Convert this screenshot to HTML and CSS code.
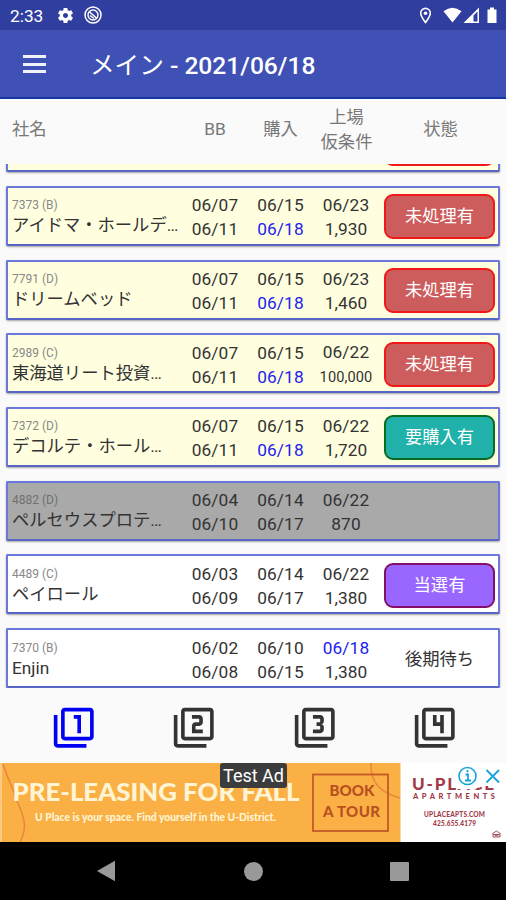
FILE: index.html
```html
<!DOCTYPE html>
<html lang="ja">
<head>
    <meta charset="UTF-8">
    <title>メイン</title>
    <link rel="stylesheet" href="styles.css">
</head>
<body>
    <div class="status-bar">
        <span class="clock">2:33</span>
        <svg class="gear" width="19" height="19" viewBox="0 0 24 24"><path fill="#fff" d="M19.14 12.94c.04-.3.06-.61.06-.94s-.02-.64-.07-.94l2.03-1.58c.18-.14.23-.41.12-.61l-1.92-3.32c-.12-.22-.37-.29-.59-.22l-2.39.96c-.5-.38-1.03-.7-1.62-.94l-.36-2.54c-.04-.24-.24-.41-.48-.41h-3.84c-.24 0-.43.17-.47.41l-.36 2.54c-.59.24-1.13.57-1.62.94l-2.39-.96c-.22-.08-.47 0-.59.22L2.74 8.87c-.12.21-.08.47.12.61l2.03 1.58c-.05.3-.09.63-.09.94s.02.64.07.94l-2.03 1.58c-.18.14-.23.41-.12.61l1.92 3.32c.12.22.37.29.59.22l2.39-.96c.5.38 1.03.7 1.62.94l.36 2.54c.05.24.24.41.48.41h3.84c.24 0 .44-.17.47-.41l.36-2.54c.59-.24 1.13-.56 1.62-.94l2.39.96c.22.08.47 0 .59-.22l1.92-3.32c.12-.22.07-.47-.12-.61l-2.01-1.58zM12 15.2c-1.76 0-3.2-1.44-3.2-3.2s1.44-3.2 3.2-3.2 3.2 1.44 3.2 3.2-1.44 3.2-3.2 3.2z"/></svg>
        <svg width="18" height="18" viewBox="0 0 18 18" fill="none" stroke="#fff">
            <circle cx="9" cy="9" r="8" stroke-width="1.5"/>
            <circle cx="9" cy="9" r="5" stroke-width="1.4"/>
            <path d="M5 5.5l8 7M6 9.5l4 3" stroke-width="1.5"/>
        </svg>
        <svg class="signals" width="76" height="20" viewBox="0 0 76 20" fill="#fff">
            <path fill="none" stroke="#fff" stroke-width="1.6" d="M3.5 17.5C.5 13.5-1.3 11-1.3 8.2a4.8 4.8 0 0 1 9.6 0c0 2.8-1.8 5.3-4.8 9.3z"/>
            <circle cx="3.5" cy="8.2" r="1.8"/>
            <path d="M21.5 6.2Q30.5-.8 39.5 6.2L30.5 17.5z"/>
            <path fill-rule="evenodd" d="M41.5 18L57 2.500V18zM51.500 16.500h4V6.500l-4 4z"/>
            <path d="M65.500 4.500h2.500v-2h4v2h2.500V18h-9z"/>
        </svg>
    </div>

    <div class="app-bar">
        <div class="menu"><i></i><i></i><i></i></div>
        <h1><span>メイン</span> - 2021/06/18</h1>
    </div>

    <div class="row head">
        <div class="head-name">社名</div>
        <div>BB</div>
        <div>購入</div>
        <div>上場<br>仮条件</div>
        <div class="head-state">状態</div>
    </div>

    <div class="list">
        <div class="row card yellow cut"><div class="state"><span class="btn red"></span></div></div>

        <div class="row card yellow">
            <div class="name"><small>7373 (B)</small><p>アイドマ・ホールデ…</p></div>
            <div>06/07<br>06/11</div>
            <div>06/15<br><b>06/18</b></div>
            <div>06/23<br>1,930</div>
            <div class="state"><span class="btn red">未処理有</span></div>
        </div>
        <div class="row card yellow">
            <div class="name"><small>7791 (D)</small><p>ドリームベッド</p></div>
            <div>06/07<br>06/11</div>
            <div>06/15<br><b>06/18</b></div>
            <div>06/23<br>1,460</div>
            <div class="state"><span class="btn red">未処理有</span></div>
        </div>
        <div class="row card yellow">
            <div class="name"><small>2989 (C)</small><p>東海道リート投資…</p></div>
            <div>06/07<br>06/11</div>
            <div>06/15<br><b>06/18</b></div>
            <div>06/22<br><span class="long">100,000</span></div>
            <div class="state"><span class="btn red">未処理有</span></div>
        </div>
        <div class="row card yellow">
            <div class="name"><small>7372 (D)</small><p>デコルテ・ホール…</p></div>
            <div>06/07<br>06/11</div>
            <div>06/15<br><b>06/18</b></div>
            <div>06/22<br>1,720</div>
            <div class="state"><span class="btn green">要購入有</span></div>
        </div>
        <div class="row card gray">
            <div class="name"><small>4882 (D)</small><p>ペルセウスプロテ…</p></div>
            <div>06/04<br>06/10</div>
            <div>06/14<br>06/17</div>
            <div>06/22<br>870</div>
            <div class="state"></div>
        </div>
        <div class="row card">
            <div class="name"><small>4489 (C)</small><p>ペイロール</p></div>
            <div>06/03<br>06/09</div>
            <div>06/14<br>06/17</div>
            <div>06/22<br>1,380</div>
            <div class="state"><span class="btn purple">当選有</span></div>
        </div>
        <div class="row card">
            <div class="name"><small>7370 (B)</small><p>Enjin</p></div>
            <div>06/02<br>06/08</div>
            <div>06/10<br>06/15</div>
            <div><b>06/18</b><br>1,380</div>
            <div class="state">後期待ち</div>
        </div>
    </div>

    <div class="tabs">
        <svg class="current" viewBox="0 0 24 24"><path d="M3 5H1v16c0 1.1.9 2 2 2h16v-2H3V5zm11 10h2V5h-4v2h2v8zm7-14H7c-1.1 0-2 .9-2 2v14c0 1.1.9 2 2 2h14c1.1 0 2-.9 2-2V3c0-1.1-.9-2-2-2zm0 16H7V3h14v14z"/></svg>
        <svg viewBox="0 0 24 24"><path d="M3 5H1v16c0 1.1.9 2 2 2h16v-2H3V5zm18-4H7c-1.1 0-2 .9-2 2v14c0 1.1.9 2 2 2h14c1.1 0 2-.9 2-2V3c0-1.1-.9-2-2-2zm0 16H7V3h14v14zm-4-4h-4v-2h2c1.1 0 2-.89 2-2V7c0-1.11-.9-2-2-2h-4v2h4v2h-2c-1.1 0-2 .89-2 2v4h6v-2z"/></svg>
        <svg viewBox="0 0 24 24"><path d="M3 5H1v16c0 1.1.9 2 2 2h16v-2H3V5zm18-4H7c-1.1 0-2 .9-2 2v14c0 1.1.9 2 2 2h14c1.1 0 2-.9 2-2V3c0-1.1-.9-2-2-2zm0 16H7V3h14v14zm-4-4v-1.5c0-.83-.67-1.5-1.5-1.5.83 0 1.5-.67 1.5-1.5V7c0-1.11-.9-2-2-2h-4v2h4v2h-2v2h2v2h-4v2h4c1.1 0 2-.89 2-2z"/></svg>
        <svg viewBox="0 0 24 24"><path d="M3 5H1v16c0 1.1.9 2 2 2h16v-2H3V5zm12 10h2V5h-2v4h-2V5h-2v6h4v4zm6-14H7c-1.1 0-2 .9-2 2v14c0 1.1.9 2 2 2h14c1.1 0 2-.9 2-2V3c0-1.1-.9-2-2-2zm0 16H7V3h14v14z"/></svg>
    </div>

    <div class="ad">
        <svg width="506" height="79" viewBox="0 0 506 79">
            <rect width="401" height="79" fill="#fbb045"/>
            <rect width="2" height="79" fill="#fdca80"/>
            <rect x="400.5" width="106" height="79" fill="#fff"/>
            <g fill="none" stroke="#e8873a" stroke-width="1.5">
                <path d="M3 1C7 14 13 25 17 38C24 53 28 65 20 79"/>
                <path d="M371 0C370 21 382 30 400 35"/>
            </g>
            <g class="slogan">
                <text x="12.5" y="37.5" font-size="25" textLength="287" lengthAdjust="spacingAndGlyphs">PRE-LEASING FOR FALL</text>
                <text x="35" y="57.5" font-size="10.5" textLength="241" lengthAdjust="spacingAndGlyphs">U Place is your space. Find yourself in the U-District.</text>
            </g>
            <rect x="313" y="11.5" width="75" height="56.5" fill="none" stroke="#c25a26" stroke-width="1.8"/>
            <g class="book">
                <text x="329.5" y="32.5" font-size="15" textLength="45">BOOK</text>
                <text x="323" y="54" font-size="15" textLength="57">A TOUR</text>
            </g>
            <g class="brand">
                <text x="412" y="27" font-size="17" textLength="82">U-PLACE</text>
                <text x="413" y="36" font-size="7.5" textLength="82">APARTMENTS</text>
                <text x="424" y="53.5" font-size="6.5" textLength="61">UPLACEAPTS.COM</text>
                <text x="433" y="62.5" font-size="6.5" textLength="43">425.655.4179</text>
            </g>
            <path d="M492 71l4.500-3 4.500 3M493 71.500v2.500h7v-2.500zM494.500 72.700h4" fill="none" stroke="#a05560" stroke-width="1"/>
            <!-- ad choices -->
            <path d="M457 4h49v19h-27l-3 3h-19z" fill="#fff"/>
            <circle cx="467.5" cy="13" r="8.5" fill="#fff" stroke="#18a4d8" stroke-width="1.6"/>
            <path d="M465.5 11.500h2.500v6M465 17.500h6M467.500 7v2.200M486.500 7l12.500 12.500M499 7l-12.500 12.500" fill="none" stroke="#18a4d8" stroke-width="1.8"/>
        </svg>
        <span class="test">Test Ad</span>
    </div>

    <div class="nav-bar">
        <svg width="20" height="22" viewBox="0 0 20 22"><path d="M1 11L19 .8v20.400z"/></svg>
        <i class="home"></i>
        <i class="recent"></i>
    </div>
</body>
</html>
```
FILE: styles.css
```css
* {
    margin: 0;
    padding: 0;
    box-sizing: border-box;
}
body {
    width: 506px;
    height: 900px;
    overflow: hidden;
    display: flex;
    flex-direction: column;
    background-color: #fafafa;
    color: #333;
    font-family: Roboto, "Noto Sans CJK JP", sans-serif;
    font-size: 17.3px;
}
svg {
    display: block;
}
.status-bar {
    flex: none;
    display: flex;
    align-items: center;
    height: 30px;
    padding: 0 8px 0 10px;
    background-color: #303f9f;
    color: #fff;
}
.clock {
    width: 46px;
    padding-top: 2px;
    font-size: 17.3px;
}
.gear {
    margin-right: 9px;
}
.signals {
    margin-left: auto;
    overflow: visible;
}
.app-bar {
    flex: none;
    display: flex;
    align-items: center;
    height: 69px;
    padding: 0 23px;
    background-color: #3f51b5;
    border-bottom: 2px solid #1735a3;
    color: #fff;
}
.menu {
    display: grid;
    gap: 4.5px;
    width: 23px;
    margin: 1px 44px 0 0;
}
.menu i {
    height: 3px;
    background-color: #f0f2fa;
}
.app-bar h1 {
    margin-top: -1px;
    font-size: 24.6px;
    font-weight: 500;
    white-space: pre;
}
.app-bar span {
    font-weight: 400;
}
.row {
    display: grid;
    grid-template-columns: 176px 66px 65px 67px 1fr;
    align-items: center;
    text-align: center;
}
.head {
    flex: none;
    height: 65px;
    padding: 0 6px 3px;
    line-height: 25.5px;
    color: #777;
}
.head-name {
    padding-left: 6px;
    text-align: left;
}
.head-state {
    padding-left: 1px;
}
.list {
    flex: none;
    display: flex;
    flex-direction: column;
    justify-content: flex-end;
    gap: 13.7px;
    height: 524px;
    padding: 0 6px;
    overflow: hidden;
}
.card {
    flex: none;
    grid-template-columns: 174px 66px 65px 66px 1fr;
    height: 60px;
    padding-top: 3px;
    line-height: 24px;
    letter-spacing: .1px;
    background-color: #fff;
    border: 2px solid #6b78dc;
    border-bottom-color: #5965c4;
    border-radius: 2px;
    box-shadow: 0 1px 2px rgba(0, 0, 0, .35);
}
.cut {
    grid-template-columns: 1fr;
    padding-left: 371px;
}
.yellow {
    background-color: #ffffe0;
}
.gray {
    background-color: #a9a9a9;
}
.card b {
    font-weight: normal;
    color: #2222ee;
}
.name {
    padding-left: 4px;
    text-align: left;
    white-space: nowrap;
}
.name small {
    display: block;
    height: 16px;
    line-height: 18px;
    font-size: 12px;
    letter-spacing: 0;
    color: #888;
}
.gray small {
    color: #707070;
}
.name p {
    line-height: 26px;
    letter-spacing: 0;
}
.long {
    font-size: 14.6px;
}
.state {
    padding: 0 3px 1px 5px;
    letter-spacing: 0;
}
.btn {
    display: block;
    height: 45px;
    line-height: 41px;
    border: 2px solid #f01818;
    border-radius: 9px;
    background-color: #cd5c5c;
    color: #fff;
}
.green {
    background-color: #20b2aa;
    border-color: #086b20;
}
.purple {
    background-color: #9966ff;
    border-color: #850f68;
}
.tabs {
    flex: none;
    display: flex;
    justify-content: space-around;
    align-items: center;
    height: 75px;
    padding: 7px 11px 0 13px;
}
.tabs svg {
    width: 43.5px;
    height: 43.5px;
    margin-top: -2px;
    fill: #333;
}
.tabs .current {
    fill: #0000f5;
}
.ad {
    position: relative;
    flex: none;
    height: 79px;
}
.ad text {
    font-family: Lato, sans-serif;
    font-weight: 900;
}
.slogan {
    fill: #fff5d5;
}
.book {
    fill: #b8501f;
}
.brand {
    fill: #a23a48;
}
.test {
    position: absolute;
    top: 0;
    left: 220px;
    width: 67px;
    height: 25px;
    line-height: 26px;
    border-radius: 3px;
    background-color: #3c3c3c;
    color: #fff;
    font-size: 18px;
    text-align: center;
    white-space: nowrap;
}
.nav-bar {
    flex: 1;
    display: flex;
    justify-content: space-between;
    align-items: center;
    padding: 0 97px 0 96px;
    background-color: #000;
    fill: #999;
}
.nav-bar i {
    width: 19px;
    height: 19px;
    background-color: #999;
}
.nav-bar .home {
    border-radius: 50%;
}
.nav-bar .recent {
    border-radius: 1px;
}
```
